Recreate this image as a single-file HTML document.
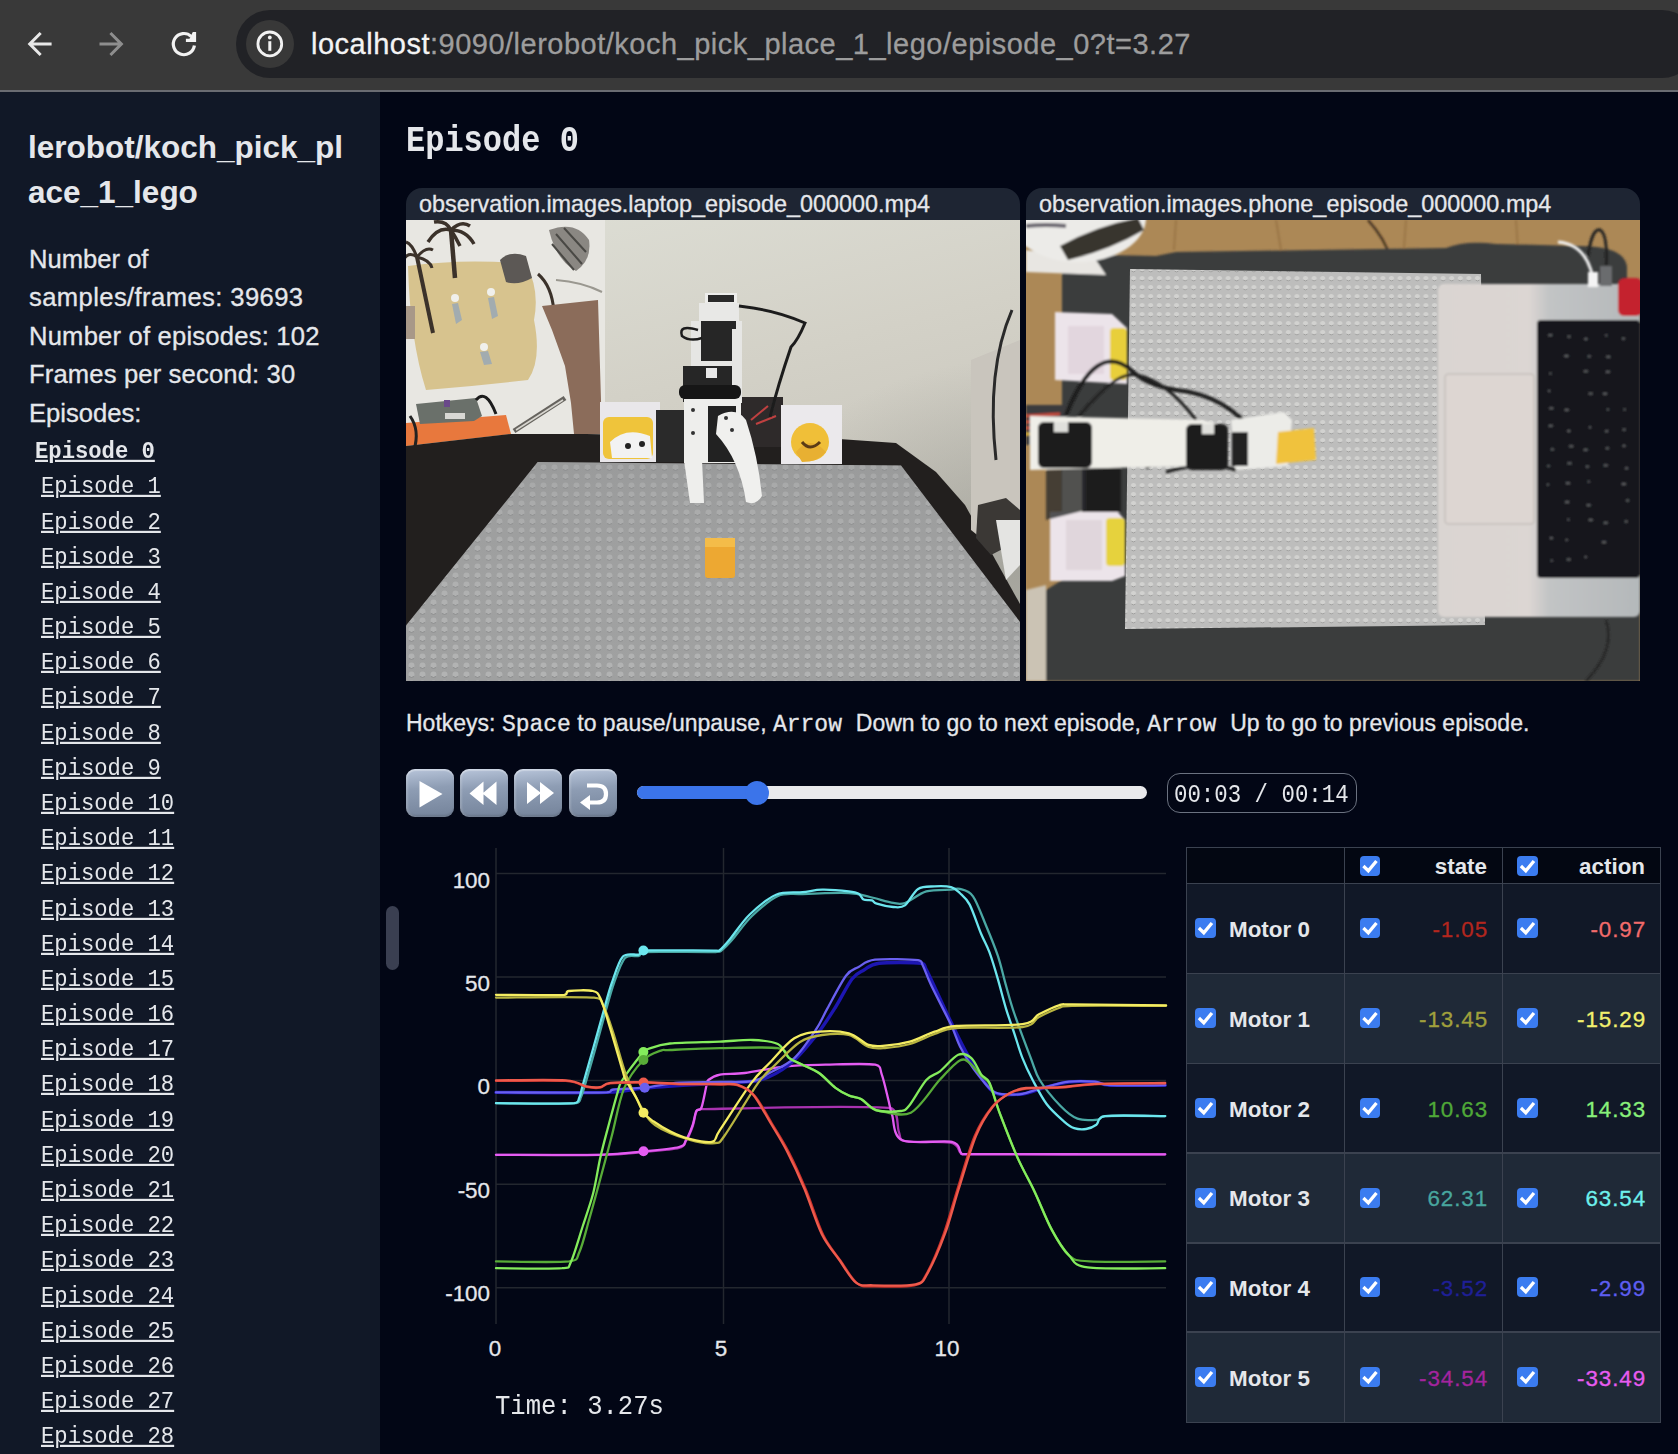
<!DOCTYPE html>
<html><head><meta charset="utf-8">
<style>
*{margin:0;padding:0;box-sizing:border-box}
html,body{width:1678px;height:1454px;overflow:hidden;background:#020615;font-family:"Liberation Sans",sans-serif;color:#e5e7eb;position:relative}
.abs{position:absolute}
.mono{font-family:"Liberation Mono",monospace}
#top{position:absolute;left:0;top:0;width:1678px;height:90px;background:#393939}
#topline{position:absolute;left:0;top:90px;width:1678px;height:2px;background:#6a6c72}
#omni{position:absolute;left:236px;top:10px;width:1460px;height:68px;border-radius:34px;background:#212226}
#infobg{position:absolute;left:246px;top:20px;width:48px;height:48px;border-radius:24px;background:#383838}
#url{position:absolute;left:311px;top:23.5px;font-size:29px;line-height:40px;color:#9d9d9d;white-space:nowrap;letter-spacing:0.5px}
#url b{font-weight:normal;color:#f4f4f4}
#side{position:absolute;left:0;top:92px;width:380px;height:1362px;background:#111827}
#title{position:absolute;left:28px;top:124.5px;font-size:31.5px;line-height:45px;font-weight:bold;color:#e5e7eb;white-space:nowrap}
.stat{position:absolute;left:29px;font-size:25.6px;line-height:38.4px;white-space:nowrap}
.ep{font-family:"Liberation Mono",monospace;font-size:22.2px;line-height:30px;white-space:nowrap;text-decoration:underline;text-decoration-thickness:2px;text-underline-offset:2px;transform:scaleY(1.1);transform-origin:0 24px}
.ep.b{font-weight:bold}
#thumb{position:absolute;left:386px;top:906px;width:13px;height:64px;border-radius:7px;background:#3a3f51}
#h1{position:absolute;left:406px;top:123px;font-size:32px;line-height:40px;font-weight:bold;transform:scaleY(1.14);transform-origin:0 28px}
.card{position:absolute;top:188px;width:614px;height:493px;border-radius:16px 16px 0 0;overflow:hidden;background:#1e2533}
.card .cap{position:absolute;left:13px;top:0;height:32px;font-size:23.4px;line-height:32px;white-space:nowrap;color:#e5e7eb}
.card .img{position:absolute;left:0;top:32px;width:614px;height:461px;overflow:hidden}
#hot{position:absolute;left:406px;top:707px;font-size:23px;line-height:32px;white-space:nowrap}
.btn{position:absolute;top:768.5px;width:47.5px;height:48px;border-radius:9px;background:linear-gradient(175deg,#b8c5da 0%,#8e9db4 40%,#74839a 100%);box-shadow:inset 0 2px 1px rgba(255,255,255,0.3),inset 2px 0 2px rgba(255,255,255,0.18),inset 0 -2px 2px rgba(0,0,0,0.12)}
.btn svg{display:block}
#track{position:absolute;left:637px;top:786px;width:510px;height:13px;border-radius:7px;background:#e9e9ec}
#fill{position:absolute;left:637px;top:786px;width:122px;height:13px;border-radius:7px;background:#3b74ea}
#knob{position:absolute;left:745px;top:781px;width:24px;height:24px;border-radius:12px;background:#3b74ea}
#timebox{position:absolute;left:1167px;top:773px;width:190px;height:40px;border:1.5px solid #6b7280;border-radius:13px}
#timetxt{position:absolute;left:1174px;top:779.5px;font-size:22.4px;line-height:32px;white-space:nowrap;transform:scaleY(1.13);transform-origin:0 23px}
.ylab{position:absolute;width:80px;text-align:right;font-size:22.4px;line-height:24px;left:410px}
.xlab{position:absolute;width:60px;text-align:center;font-size:22.4px;line-height:24px;top:1337px}
#timelab{position:absolute;left:495px;top:1392px;font-size:25.6px;line-height:32px;white-space:nowrap;transform:scaleY(1.1);transform-origin:0 23px}
.cbx{background:#3b7cf0;border-radius:4px}
.cbx svg{display:block}
.th{font-size:22.4px;line-height:32px;font-weight:bold;text-align:right;white-space:nowrap}
.tm{font-size:22.4px;line-height:32px;font-weight:bold;white-space:nowrap}
.tv{font-size:22.4px;line-height:32px;text-align:right;white-space:nowrap;letter-spacing:0.9px}

.stat,#hot,.card .cap,#url,.tv,.ylab,.xlab{-webkit-text-stroke:0.3px currentColor}

</style></head><body>
<div id="top"></div><div id="topline"></div>
<div id="omni"></div><div id="infobg"></div>
<svg class="abs" style="left:0;top:0" width="320" height="90" viewBox="0 0 320 90">
<path transform="translate(21.6,26) scale(1.5)" d="M20 11H7.83l5.59-5.59L12 4l-8 8 8 8 1.41-1.41L7.83 13H20v-2z" fill="#e8e8e8"/>
<path transform="translate(129.5,26) scale(-1.5,1.5)" d="M20 11H7.83l5.59-5.59L12 4l-8 8 8 8 1.41-1.41L7.83 13H20v-2z" fill="#8e8e8e"/>
<path d="M191.2 36.4 A10.6 10.6 0 1 0 194.4 45.6" stroke="#f2f2f2" stroke-width="3.2" fill="none"/><path d="M192.8 31.9 H196.1 V42.1 H185.9 V38.8 H189.5 Z" fill="#f2f2f2"/>
<circle cx="269.8" cy="43.9" r="11.9" stroke="#f2f2f2" stroke-width="2.8" fill="none"/>
<circle cx="269.8" cy="37.5" r="1.9" fill="#f2f2f2"/>
<rect x="268.3" y="41.2" width="3" height="9.6" fill="#f2f2f2"/>
</svg>
<div id="url"><b>localhost</b>:9090/lerobot/koch_pick_place_1_lego/episode_0?t=3.27</div>
<div id="side"></div>
<div id="title">lerobot/koch_pick_pl<br>ace_1_lego</div>
<div class="stat" style="top:240px">Number of</div>
<div class="stat" style="top:278px;letter-spacing:0.4px">samples/frames: 39693</div>
<div class="stat" style="top:317px;letter-spacing:0.2px">Number of episodes: 102</div>
<div class="stat" style="top:355px;letter-spacing:0.15px">Frames per second: 30</div>
<div class="stat" style="top:394px">Episodes:</div>
<div class="abs ep b" style="left:35px;top:437.5px">Episode 0</div>
<div class="abs ep" style="left:41px;top:473.3px">Episode 1</div>
<div class="abs ep" style="left:41px;top:508.5px">Episode 2</div>
<div class="abs ep" style="left:41px;top:543.7px">Episode 3</div>
<div class="abs ep" style="left:41px;top:578.9px">Episode 4</div>
<div class="abs ep" style="left:41px;top:614.0px">Episode 5</div>
<div class="abs ep" style="left:41px;top:649.2px">Episode 6</div>
<div class="abs ep" style="left:41px;top:684.4px">Episode 7</div>
<div class="abs ep" style="left:41px;top:719.6px">Episode 8</div>
<div class="abs ep" style="left:41px;top:754.8px">Episode 9</div>
<div class="abs ep" style="left:41px;top:790.0px">Episode 10</div>
<div class="abs ep" style="left:41px;top:825.2px">Episode 11</div>
<div class="abs ep" style="left:41px;top:860.3px">Episode 12</div>
<div class="abs ep" style="left:41px;top:895.5px">Episode 13</div>
<div class="abs ep" style="left:41px;top:930.7px">Episode 14</div>
<div class="abs ep" style="left:41px;top:965.9px">Episode 15</div>
<div class="abs ep" style="left:41px;top:1001.1px">Episode 16</div>
<div class="abs ep" style="left:41px;top:1036.3px">Episode 17</div>
<div class="abs ep" style="left:41px;top:1071.4px">Episode 18</div>
<div class="abs ep" style="left:41px;top:1106.6px">Episode 19</div>
<div class="abs ep" style="left:41px;top:1141.8px">Episode 20</div>
<div class="abs ep" style="left:41px;top:1177.0px">Episode 21</div>
<div class="abs ep" style="left:41px;top:1212.2px">Episode 22</div>
<div class="abs ep" style="left:41px;top:1247.4px">Episode 23</div>
<div class="abs ep" style="left:41px;top:1282.6px">Episode 24</div>
<div class="abs ep" style="left:41px;top:1317.7px">Episode 25</div>
<div class="abs ep" style="left:41px;top:1352.9px">Episode 26</div>
<div class="abs ep" style="left:41px;top:1388.1px">Episode 27</div>
<div class="abs ep" style="left:41px;top:1423.3px">Episode 28</div>
<div id="thumb"></div>
<div id="h1" class="mono">Episode 0</div>
<div class="card" style="left:406px"><div class="cap">observation.images.laptop_episode_000000.mp4</div><div class="img"><svg width="614" height="461" viewBox="0 0 614 461" style="display:block">
<defs>
<linearGradient id="wall1" x1="0" y1="0" x2="0.35" y2="1"><stop offset="0" stop-color="#dedfd6"/><stop offset="0.45" stop-color="#d3d1c7"/><stop offset="1" stop-color="#c4c1b8"/></linearGradient><radialGradient id="wallsh" cx="1" cy="0.75" r="0.45"><stop offset="0" stop-color="#8e8f88" stop-opacity="0.6"/><stop offset="1" stop-color="#8e8f88" stop-opacity="0"/></radialGradient>
<pattern id="stud1" width="11" height="9" patternUnits="userSpaceOnUse"><rect width="11" height="9" fill="#9fa0a0"/><circle cx="5.5" cy="4.5" r="3" fill="#b2b3b3"/><path d="M3 6.5 Q5.5 8.5 8 6.5" stroke="#8a8b8c" stroke-width="1" fill="none"/></pattern>
<linearGradient id="plate1" x1="0" y1="0" x2="0" y2="1"><stop offset="0" stop-color="#909192" stop-opacity="0.35"/><stop offset="1" stop-color="#b0b0b0" stop-opacity="0"/></linearGradient>
<filter id="bl1"><feGaussianBlur stdDeviation="0.7"/></filter>
</defs>
<rect width="614" height="461" fill="url(#wall1)"/><rect width="614" height="461" fill="url(#wallsh)"/>
<g filter="url(#bl1)">
<rect x="0" y="0" width="199" height="214" fill="#e8e7e2"/>
<path d="M2,46 Q60,38 120,44 Q134,70 128,100 Q136,140 122,160 Q70,166 20,170 Q4,120 2,46 Z" fill="#d7c38e"/>
<path d="M45,10 Q47,35 49,58" stroke="#3b312a" stroke-width="4.5" fill="none"/>
<path d="M45,10 Q32,6 22,22 M45,10 Q40,0 28,2 M45,10 Q55,0 64,6 M45,10 Q60,10 68,24 M45,10 Q50,18 54,26" stroke="#3b312a" stroke-width="3.5" fill="none"/>
<path d="M11,37 Q18,70 27,113" stroke="#3b312a" stroke-width="4" fill="none"/>
<path d="M11,37 Q2,30 -4,42 M11,37 Q6,24 0,22 M11,37 Q20,26 27,30 M11,37 Q24,40 26,48" stroke="#3b312a" stroke-width="3" fill="none"/>
<g fill="#a2acb0"><path d="M46,84 L52,83 L56,100 L50,104 Z"/><path d="M82,78 L88,77 L92,96 L86,99 Z"/><path d="M74,132 L82,131 L86,144 L78,145 Z"/></g><g fill="#f0f0ec"><circle cx="49" cy="78" r="4"/><circle cx="85" cy="72" r="4"/><circle cx="78" cy="127" r="4"/></g>
<path d="M94,40 Q104,30 120,36 L126,58 Q112,66 100,62 Z" fill="#5c5854"/>
<path d="M143,10 Q170,0 183,20 Q186,40 170,51 Q150,40 143,10 Z" fill="#8a8782"/>
<path d="M150,14 L176,44 M158,8 L180,32 M146,24 L168,50" stroke="#4a4844" stroke-width="2"/>
<path d="M132,54 Q146,66 148,92" stroke="#3b312a" stroke-width="3" fill="none"/>
<path d="M150,60 Q176,62 196,72" stroke="#9a9890" stroke-width="2" fill="none"/>
<polygon points="136,86 192,80 196,214 168,214 165,183 159,146 146,110" fill="#8b6c5a"/>
<rect x="0" y="86" width="9" height="33" fill="#a89888"/>
<path d="M108,211 L159,178" stroke="#66645e" stroke-width="5"/><path d="M110,210 L157,180" stroke="#d8d6d0" stroke-width="1.5"/>
<polygon points="0,203 100,195 105,214 0,226" fill="#e8783c"/>
<polygon points="10,184 70,178 76,196 68,201 14,204" fill="#6a706a"/><rect x="39" y="193" width="20" height="6" fill="#d8d8d4"/><rect x="38" y="180" width="6" height="7" fill="#6a4a8a"/>
<path d="M70,180 Q80,168 90,194" stroke="#1a1a1a" stroke-width="3" fill="none"/>
<path d="M4,196 Q14,210 8,230" stroke="#222" stroke-width="3" fill="none"/>
</g>
<polygon points="0,226 105,214 180,214 433,219 490,223 530,252 559,285 614,384 614,461 0,461" fill="#221f1e"/>
<polygon points="131.7,242 495,245.5 614,402 614,461 0,461 0,405.6" fill="url(#stud1)"/>
<polygon points="131.7,242 495,245.5 614,402 614,461 0,461 0,405.6" fill="url(#plate1)"/>
<g filter="url(#bl1)">
<polygon points="565,140 614,120 614,300 590,330 565,310" fill="#c9c5bd"/>
<path d="M606,90 Q580,150 590,240" stroke="#2a2a2a" stroke-width="3" fill="none"/>
<polygon points="572,285 600,278 614,290 614,320 585,335 570,318" fill="#3a3836"/>
<polygon points="590,300 614,300 614,345 600,360" fill="#e4e4e2"/>
<rect x="194" y="182" width="60" height="60" fill="#e9e7ea"/>
<rect x="197" y="197" width="50" height="42" rx="6" fill="#efc43a"/>
<path d="M204,222 Q220,206 244,216 L246,238 L206,238 Z" fill="#f2f2f2"/>
<circle cx="222" cy="226" r="3" fill="#222"/><circle cx="236" cy="224" r="3" fill="#222"/>
<rect x="250" y="190" width="30" height="52" fill="#2a2c2c"/>
<rect x="335" y="177" width="42" height="50" fill="#2e2c2c"/>
<path d="M345,200 L362,186 M350,204 L370,196" stroke="#c04040" stroke-width="2"/>
<rect x="375" y="185" width="61" height="59" fill="#ebe9ec"/>
<circle cx="404" cy="222" r="19" fill="#f0bf38"/>
<path d="M390,232 Q404,214 420,232 Q412,242 396,242 Z" fill="#e8b030"/>
<path d="M396,222 Q404,232 414,222" stroke="#5a3a18" stroke-width="3" fill="none"/>
<rect x="299" y="73" width="32" height="12" fill="#ededeb"/>
<rect x="302" y="75" width="26" height="7" fill="#2c2c2c"/>
<rect x="293" y="83" width="40" height="20" fill="#e8e8e6"/>
<rect x="285" y="101" width="51" height="46" fill="#e6e6e4"/>
<rect x="295" y="101" width="35" height="40" fill="#262626"/>
<rect x="277" y="146" width="59" height="36" fill="#282828"/>
<rect x="326" y="109" width="10" height="74" fill="#e6e6e4"/>
<rect x="273" y="165" width="62" height="14" rx="6" fill="#161616"/>
<rect x="300" y="148" width="11" height="10" fill="#e8e8e8"/>
<path d="M333,86 Q370,90 399,103 Q392,120 385,127 Q372,165 364,197" stroke="#1e1e1e" stroke-width="3" fill="none"/>
<path d="M292,110 Q272,104 276,116 Q284,122 296,118" stroke="#1e1e1e" stroke-width="2.5" fill="none"/>
<rect x="278" y="179" width="57" height="64" fill="#eeeeec"/>
<path d="M278,240 L296,240 L298,283 L284,283 Z" fill="#eeeeec"/>
<rect x="302" y="186" width="28" height="56" fill="#242424"/>
<path d="M312,196 Q330,186 340,200 Q352,236 356,276 Q350,286 340,282 Q334,240 310,214 Z" fill="#f0f0ee"/>
<g fill="#333"><circle cx="287" cy="190" r="2"/><circle cx="287" cy="213" r="2"/><circle cx="320" cy="198" r="2"/><circle cx="326" cy="210" r="2"/></g>
<rect x="299" y="318" width="30" height="40" rx="3" fill="#eda832"/>
<rect x="299" y="318" width="30" height="9" fill="#f4bc4a"/>
</g>
</svg></div></div>
<div class="card" style="left:1026px"><div class="cap">observation.images.phone_episode_000000.mp4</div><div class="img"><svg width="614" height="461" viewBox="0 0 614 461" style="display:block">
<defs>
<pattern id="stud2" width="8.6" height="9" patternUnits="userSpaceOnUse"><rect width="8.6" height="9" fill="#bdbdbc"/><circle cx="4.3" cy="4.5" r="2.6" fill="#d2d2d0"/><path d="M2.2 6 Q4.3 7.8 6.4 6" stroke="#9a9a99" stroke-width="0.9" fill="none"/></pattern>
<linearGradient id="lap" x1="0" y1="0" x2="1" y2="0"><stop offset="0" stop-color="#dad5d2"/><stop offset="0.45" stop-color="#dcd6d3"/><stop offset="0.55" stop-color="#c2c4c5"/><stop offset="1" stop-color="#b4b8ba"/></linearGradient>
<filter id="bl2"><feGaussianBlur stdDeviation="0.8"/></filter>
</defs>
<rect width="614" height="461" fill="#ac8856"/>
<g filter="url(#bl2)">
<path d="M150,0 L148,30 M250,0 L255,30 M380,0 L378,28 M490,0 L492,30" stroke="#9a7646" stroke-width="2"/>
<path d="M342,0 Q360,20 365,40" stroke="#3a2a1a" stroke-width="2" fill="none"/>
<polygon points="0,370 20,365 20,461 0,461" fill="#cbc3b4"/>
<!-- table -->
<path d="M36,38 Q60,34 130,36 L150,32 L420,28 Q440,20 470,24 L552,26 Q598,26 601,46 L601,62 L614,62 L614,461 L20,461 L20,370 L36,360 Z" fill="#3b3c3e"/>
<!-- bowl -->
<polygon points="0,30 70,40 80,55 0,52" fill="#e8e6e2"/>
<ellipse cx="52" cy="-2" rx="68" ry="44" fill="#ecebe8"/>

<path d="M34,26 Q70,6 112,-2 L118,10 Q84,30 42,40 Z" fill="#38342e"/>
<path d="M0,6 Q20,4 40,6" stroke="#6a6670" stroke-width="4" fill="none"/>
</g>
<!-- lego plate -->
<polygon points="104,49 455,54 459,405 99,409" fill="url(#stud2)"/>
<g filter="url(#bl2)">
<!-- laptop -->
<rect x="412" y="64" width="202" height="333" rx="6" fill="url(#lap)"/>
<rect x="419" y="154" width="89" height="150" rx="3" fill="#ddd6d2" stroke="#b8b4b0" stroke-width="1"/>
<rect x="511" y="100" width="103" height="258" rx="4" fill="#17181b"/>
<g fill="#5e6064">
<rect x="522.3" y="114.2" width="4" height="2" />
<rect x="541.5" y="115.6" width="3" height="2" />
<rect x="558.4" y="118.0" width="3" height="2" />
<rect x="579.3" y="114.4" width="2" height="2" />
<rect x="595.9" y="117.6" width="3" height="2" />
<rect x="538.4" y="135.0" width="4" height="2" />
<rect x="561.7" y="135.4" width="3" height="2" />
<rect x="580.3" y="135.8" width="4" height="2" />
<rect x="523.4" y="152.5" width="2" height="2" />
<rect x="557.8" y="150.3" width="4" height="2" />
<rect x="579.8" y="150.8" width="4" height="2" />
<rect x="522.2" y="169.9" width="2" height="2" />
<rect x="562.6" y="172.6" width="4" height="2" />
<rect x="577.0" y="172.7" width="4" height="2" />
<rect x="523.3" y="187.3" width="4" height="2" />
<rect x="538.7" y="188.9" width="4" height="2" />
<rect x="580.8" y="188.5" width="2" height="2" />
<rect x="597.6" y="188.5" width="2" height="2" />
<rect x="522.7" y="204.8" width="4" height="2" />
<rect x="541.3" y="210.0" width="3" height="2" />
<rect x="563.0" y="206.4" width="2" height="2" />
<rect x="579.2" y="210.2" width="3" height="2" />
<rect x="596.6" y="208.6" width="3" height="2" />
<rect x="524.8" y="228.4" width="3" height="2" />
<rect x="543.2" y="225.3" width="4" height="2" />
<rect x="557.6" y="228.8" width="4" height="2" />
<rect x="579.8" y="227.3" width="3" height="2" />
<rect x="596.5" y="224.8" width="3" height="2" />
<rect x="521.5" y="245.0" width="2" height="2" />
<rect x="541.5" y="242.3" width="4" height="2" />
<rect x="559.8" y="245.6" width="3" height="2" />
<rect x="577.7" y="244.4" width="4" height="2" />
<rect x="599.1" y="247.3" width="3" height="2" />
<rect x="520.8" y="263.6" width="2" height="2" />
<rect x="539.9" y="262.2" width="4" height="2" />
<rect x="561.7" y="260.6" width="2" height="2" />
<rect x="595.8" y="263.0" width="4" height="2" />
<rect x="539.1" y="281.1" width="4" height="2" />
<rect x="560.6" y="284.2" width="4" height="2" />
<rect x="600.1" y="279.5" width="3" height="2" />
<rect x="541.4" y="298.6" width="2" height="2" />
<rect x="562.7" y="298.9" width="4" height="2" />
<rect x="577.7" y="301.8" width="4" height="2" />
<rect x="598.7" y="300.5" width="3" height="2" />
<rect x="523.8" y="317.1" width="3" height="2" />
<rect x="539.7" y="318.9" width="2" height="2" />
<rect x="576.0" y="321.2" width="4" height="2" />
<rect x="524.7" y="339.6" width="2" height="2" />
<rect x="540.7" y="338.5" width="4" height="2" />
<rect x="558.7" y="336.0" width="2" height="2" />
</g>
<rect x="592" y="58" width="24" height="38" rx="6" fill="#c4222e"/>
<path d="M532,22 Q560,24 567,58" stroke="#f2f2f2" stroke-width="3" fill="none"/>
<rect x="562" y="52" width="10" height="15" fill="#f4f4f4"/>
<path d="M562,36 Q566,8 574,10 Q582,14 580,48" stroke="#222" stroke-width="3" fill="none"/>
<rect x="574" y="46" width="12" height="20" fill="#6a6c6e"/>
<path d="M580,400 Q590,430 560,461" stroke="#222" stroke-width="2" fill="none"/>
<!-- boxes -->
<polygon points="29,92 86,94 101,108 101,164 29,160" fill="#ece4ea"/>
<rect x="42" y="106" width="36" height="48" fill="#e2d6de"/>
<rect x="84" y="108" width="17" height="52" rx="4" fill="#e8cf3a"/>
<polygon points="24,292 90,290 99,300 99,356 86,361 24,361" fill="#ece4ea"/>
<rect x="40" y="300" width="36" height="50" fill="#e0d6dc"/>
<rect x="80" y="298" width="19" height="48" rx="4" fill="#e6d23c"/>
<!-- electronics left -->
<rect x="0" y="185" width="40" height="40" fill="#3a3a3c"/>
<path d="M0,196 L34,194 M0,202 L34,200 M0,208 L30,207" stroke="#c84a3a" stroke-width="3"/>
<path d="M0,214 L30,214" stroke="#d8b030" stroke-width="3"/>
<rect x="55" y="245" width="40" height="47" fill="#1c1c1e"/>
<rect x="36" y="245" width="20" height="47" fill="#e8e6e0"/>
<path d="M20,250 Q40,240 60,250 L60,290 L20,300 Z" fill="#2a2c2c" opacity="0.8"/>
<!-- cables -->
<path d="M40,195 Q70,120 105,150 Q120,165 150,170 Q200,175 230,215" stroke="#1a1a1a" stroke-width="4" fill="none"/>
<path d="M50,200 Q90,150 110,155 Q140,160 170,200" stroke="#222" stroke-width="3" fill="none"/>
<path d="M120,248 Q150,230 170,246 M140,252 Q180,240 210,250" stroke="#1a1a1a" stroke-width="3" fill="none"/>
<!-- arm -->
<polygon points="4,196 176,200 200,206 200,248 160,246 4,250" fill="#efeee8"/>
<rect x="12" y="202" width="54" height="46" rx="6" fill="#1f1f1f"/>
<rect x="28" y="202" width="14" height="10" fill="#e0e0dc"/>
<rect x="160" y="204" width="42" height="46" rx="6" fill="#1f1f1f"/>
<rect x="176" y="204" width="12" height="10" fill="#e0e0dc"/>
<polygon points="205,200 258,192 266,200 262,246 210,250" fill="#ecece8"/>
<rect x="206" y="212" width="16" height="34" fill="#222"/>
<polygon points="252,212 288,208 290,240 250,244" fill="#f0c23e"/>
</g>
</svg></div></div>
<div id="hot">Hotkeys: <span class="mono">Space</span> to pause/unpause, <span class="mono">Arrow </span>Down to go to next episode, <span class="mono">Arrow </span>Up to go to previous episode.</div>
<div class="btn" style="left:406px"><svg width="48" height="48" viewBox="0 0 48 48"><path d="M13.5 12 L36.5 25 L13.5 38.5 Z" fill="#fff"/></svg></div>
<div class="btn" style="left:460px"><svg width="48" height="48" viewBox="0 0 48 48"><path d="M9.5 24.5 L23.5 12.5 V36 Z M22.5 24.5 L36.5 12.5 V36 Z" fill="#fff"/></svg></div>
<div class="btn" style="left:514px"><svg width="48" height="48" viewBox="0 0 48 48"><path d="M13 13 L27 24 L13 35 Z M26 13 L40 24 L26 35 Z" fill="#fff"/></svg></div>
<div class="btn" style="left:569px"><svg width="48" height="48" viewBox="0 0 48 48"><path d="M18 16.5 H28 Q37 16.5 37 25 Q37 33.5 28 33.5 H20" stroke="#fff" stroke-width="4.2" fill="none"/><path d="M11 33.5 L21 26 V41 Z" fill="#fff"/></svg></div>
<div id="track"></div><div id="fill"></div><div id="knob"></div>
<div id="timebox"></div><div id="timetxt" class="mono">00:03 / 00:14</div>
<svg class="abs" style="left:0;top:0" width="1678" height="1454" viewBox="0 0 1678 1454">
<line x1="496" y1="873.4" x2="1166" y2="873.4" stroke="#23272f" stroke-width="1.5"/>
<line x1="496" y1="977" x2="1166" y2="977" stroke="#23272f" stroke-width="1.5"/>
<line x1="496" y1="1080.6" x2="1166" y2="1080.6" stroke="#23272f" stroke-width="1.5"/>
<line x1="496" y1="1184.2" x2="1166" y2="1184.2" stroke="#23272f" stroke-width="1.5"/>
<line x1="496" y1="1287.8" x2="1166" y2="1287.8" stroke="#23272f" stroke-width="1.5"/>
<line x1="496" y1="848" x2="496" y2="1324" stroke="#23272f" stroke-width="1.5"/>
<line x1="723.5" y1="848" x2="723.5" y2="1324" stroke="#23272f" stroke-width="1.5"/>
<line x1="949" y1="848" x2="949" y2="1324" stroke="#23272f" stroke-width="1.5"/>
<path d="M496.0,1154.8 C512.6,1154.8 576.4,1155.2 600.0,1154.8 C623.6,1154.4 630.9,1153.1 643.5,1152.0 C656.1,1150.9 672.2,1149.8 679.0,1148.0 C685.8,1146.2 683.8,1144.5 686.0,1141.0 C688.2,1137.5 691.2,1130.6 692.8,1126.0 C694.4,1121.4 694.9,1114.7 696.3,1112.0 C697.7,1109.3 696.3,1109.8 701.5,1109.2 C732.8,1108.6 860.4,1104.8 892.0,1108.4 C898.8,1112.0 896.9,1126.4 898.8,1131.6 C900.7,1136.8 898.8,1139.2 904.0,1141.0 C912.3,1142.8 941.4,1140.9 950.4,1142.7 C959.4,1144.5 958.1,1150.3 960.0,1152.2 C961.9,1154.1 960.0,1154.0 962.3,1154.3 C995.1,1154.6 1132.7,1154.3 1165.2,1154.3" fill="none" stroke="#a832b0" stroke-width="2.3" stroke-linejoin="round" stroke-linecap="round"/>
<path d="M496.0,1154.8 C512.6,1154.8 576.4,1155.4 600.0,1154.8 C623.6,1154.2 630.9,1152.5 643.5,1151.3 C656.1,1150.1 672.2,1148.8 679.0,1147.0 C685.8,1145.2 683.8,1143.8 686.0,1140.2 C688.2,1136.6 691.2,1129.4 692.8,1124.7 C694.4,1120.0 694.9,1113.8 696.3,1111.0 C697.7,1108.2 699.9,1111.7 701.5,1107.5 C703.1,1103.3 705.5,1089.4 706.6,1085.0 C707.7,1080.6 706.6,1081.7 708.3,1080.0 C710.4,1078.3 714.2,1075.7 720.0,1074.6 C725.8,1073.5 734.2,1074.3 744.8,1073.0 C755.4,1071.7 773.1,1067.6 786.0,1066.3 C798.9,1065.0 811.3,1065.0 825.6,1064.7 C839.9,1064.4 866.2,1063.1 875.2,1064.7 C881.8,1066.3 879.7,1069.0 881.8,1074.6 C883.9,1080.2 886.8,1093.6 888.4,1100.0 C890.0,1106.4 889.8,1108.0 892.0,1114.4 C894.2,1120.8 892.6,1135.8 902.2,1140.2 C911.8,1144.6 942.7,1140.0 952.0,1141.9 C960.6,1143.8 959.0,1150.3 960.6,1152.2 C962.2,1154.1 960.6,1153.7 962.3,1154.0 C995.0,1154.3 1132.7,1154.3 1165.2,1154.3" fill="none" stroke="#e45cf2" stroke-width="2.3" stroke-linejoin="round" stroke-linecap="round"/>
<path d="M496.0,1092.4 C513.7,1092.4 583.1,1093.1 606.9,1092.4 C630.7,1091.7 626.6,1089.5 644.7,1088.0 C662.8,1086.5 701.6,1084.3 720.0,1083.0 C738.4,1081.7 748.8,1083.0 760.0,1080.0 C771.2,1077.0 781.1,1071.0 790.0,1064.0 C798.9,1057.0 808.5,1045.0 815.7,1036.0 C822.9,1027.0 829.2,1017.1 835.0,1008.0 C840.8,998.9 847.4,985.1 852.0,979.0 C856.6,972.9 859.7,972.5 864.0,970.0 C868.3,967.5 869.9,964.3 879.0,963.2 C888.1,962.1 913.5,962.3 921.0,963.2 C926.0,964.1 923.6,964.7 926.0,969.0 C928.4,973.3 932.2,981.8 936.0,990.0 C939.8,998.2 945.4,1010.4 950.0,1020.0 C954.6,1029.6 960.0,1041.0 964.8,1049.8 C969.6,1058.6 975.2,1068.1 980.0,1075.0 C984.8,1081.9 988.2,1090.0 995.0,1093.0 C1001.8,1096.0 1014.8,1094.8 1022.5,1094.0 C1030.2,1093.2 1035.7,1089.9 1043.1,1088.0 C1050.5,1086.1 1060.7,1083.0 1069.0,1082.0 C1077.3,1081.0 1088.1,1081.5 1094.7,1082.0 C1101.3,1082.5 1098.9,1084.7 1110.2,1085.2 C1121.5,1085.7 1156.4,1085.2 1165.2,1085.2" fill="none" stroke="#1d16b2" stroke-width="3.4" stroke-linejoin="round" stroke-linecap="round"/>
<path d="M496.0,1092.4 C513.7,1092.4 588.1,1092.9 606.9,1092.4 C613.8,1091.9 607.8,1090.3 613.8,1089.5 C619.8,1088.7 634.3,1088.8 644.7,1087.7 C655.1,1086.6 667.0,1083.5 679.0,1082.6 C691.0,1081.7 708.2,1082.2 720.0,1082.0 C731.8,1081.8 745.1,1082.6 753.0,1081.2 C760.9,1079.8 762.9,1076.7 769.5,1073.0 C776.1,1069.3 786.9,1065.0 794.3,1058.1 C801.7,1051.2 810.4,1037.9 815.7,1030.0 C821.0,1022.1 822.5,1017.3 827.3,1008.6 C832.1,999.9 841.0,982.4 846.0,975.7 C851.0,969.0 854.0,969.6 858.6,967.0 C863.2,964.4 865.5,960.8 875.0,959.7 C884.5,958.6 910.3,959.2 918.0,960.2 C923.0,961.2 920.9,962.0 923.0,966.0 C925.1,970.0 926.8,976.0 931.3,985.5 C935.8,995.0 946.5,1015.3 951.1,1025.1 C955.7,1034.9 956.5,1039.6 960.0,1046.5 C963.5,1053.4 967.8,1060.9 973.0,1068.0 C978.2,1075.1 987.0,1086.9 992.8,1091.1 C998.6,1095.3 1004.5,1094.0 1009.3,1094.4 C1014.1,1094.8 1017.1,1094.9 1022.5,1093.8 C1027.9,1092.7 1035.7,1089.6 1043.1,1087.7 C1050.5,1085.8 1060.7,1082.7 1069.0,1081.7 C1077.3,1080.7 1088.1,1081.1 1094.7,1081.7 C1101.3,1082.3 1098.9,1084.6 1110.2,1085.2 C1121.5,1085.8 1156.4,1085.2 1165.2,1085.2" fill="none" stroke="#6a60f0" stroke-width="2.3" stroke-linejoin="round" stroke-linecap="round"/>
<path d="M496.0,1103.2 C508.8,1103.2 562.4,1104.2 576.0,1103.2 C581.0,1102.2 579.6,1099.9 581.0,1097.0 C582.4,1094.1 582.8,1092.5 585.0,1085.0 C587.2,1077.5 591.6,1062.0 595.0,1050.0 C598.4,1038.0 603.0,1020.7 606.0,1010.0 C609.0,999.3 611.0,991.3 614.0,983.0 C617.0,974.7 621.0,962.3 625.0,958.0 C629.0,953.7 635.8,957.0 638.7,956.0 C641.6,955.0 638.7,952.6 643.4,952.0 C655.8,951.4 703.4,952.3 716.0,952.0 C722.0,951.7 719.4,951.9 722.0,950.0 C724.6,948.1 727.2,945.4 732.0,940.0 C736.8,934.6 744.6,923.0 752.0,916.0 C759.4,909.0 769.9,899.5 778.0,896.0 C786.1,892.5 791.2,894.5 802.5,894.0 C813.8,893.5 838.0,892.5 848.8,893.0 C859.6,893.5 862.9,895.4 870.0,897.0 C877.1,898.6 887.7,901.9 893.3,902.9 C898.9,903.9 899.7,904.8 905.0,903.0 C910.3,901.2 918.9,893.5 926.3,891.4 C933.7,889.3 945.6,890.1 951.0,889.7 C956.4,889.3 956.3,887.8 959.8,888.9 C963.3,890.0 968.8,890.4 973.0,896.3 C977.2,902.2 982.2,916.5 986.2,926.0 C990.2,935.5 994.6,946.2 997.8,955.7 C1001.0,965.2 1003.4,976.3 1006.0,985.5 C1008.6,994.7 1010.3,1001.9 1014.3,1013.5 C1018.3,1025.1 1026.7,1047.5 1030.8,1058.1 C1034.9,1068.7 1035.0,1072.4 1039.7,1080.0 C1044.4,1087.6 1054.3,1099.6 1060.3,1105.8 C1066.3,1112.0 1071.4,1116.5 1077.5,1118.7 C1083.6,1120.9 1093.8,1119.9 1098.2,1119.5 C1102.6,1119.1 1098.2,1116.6 1105.0,1116.1 C1115.7,1115.6 1155.6,1116.1 1165.2,1116.1" fill="none" stroke="#4aa8a4" stroke-width="2.3" stroke-linejoin="round" stroke-linecap="round"/>
<path d="M496.0,1103.2 C508.5,1103.2 560.9,1104.2 574.2,1103.2 C579.4,1102.2 578.0,1100.1 579.4,1097.2 C580.8,1094.3 580.7,1092.6 582.8,1085.0 C584.9,1077.4 589.4,1061.8 592.8,1049.8 C596.2,1037.8 600.9,1020.7 603.9,1010.0 C606.9,999.3 608.8,991.6 611.8,983.0 C614.8,974.4 618.6,961.0 622.9,956.5 C627.2,952.0 635.4,955.6 638.7,954.6 C642.0,953.6 638.7,951.1 643.4,950.5 C655.8,949.9 703.7,950.7 716.0,950.6 C720.0,950.5 717.8,951.8 720.0,950.0 C722.2,948.2 725.1,944.9 729.9,939.2 C734.7,933.5 742.3,921.6 749.7,914.5 C757.1,907.4 767.7,898.3 776.1,894.7 C784.5,891.1 795.1,893.0 802.5,892.2 C809.9,891.4 814.9,889.8 822.3,889.7 C829.7,889.6 843.0,890.7 848.8,891.4 C854.6,892.1 856.3,892.5 858.7,893.8 C861.1,895.1 861.5,898.5 863.6,899.6 C865.7,900.7 869.8,899.7 871.9,900.4 C874.0,901.1 873.4,902.6 876.8,903.7 C880.2,904.8 888.8,906.7 893.3,907.0 C897.8,907.3 900.9,908.3 904.9,905.4 C908.9,902.5 913.3,891.9 918.1,888.9 C922.9,885.9 929.3,886.7 934.6,886.4 C939.9,886.1 947.1,886.1 951.1,887.2 C955.1,888.3 956.8,890.2 959.8,893.0 C962.8,895.8 966.3,898.0 969.7,904.6 C973.1,911.2 978.1,926.7 981.3,934.3 C984.5,941.9 986.9,945.3 989.5,952.4 C992.1,959.5 995.2,969.9 997.8,978.9 C1000.4,987.9 1003.4,999.9 1006.0,1008.6 C1008.6,1017.3 1011.7,1025.4 1014.3,1033.3 C1016.9,1041.2 1019.6,1050.7 1022.5,1058.1 C1025.4,1065.5 1028.5,1072.2 1032.4,1079.5 C1036.3,1086.8 1041.6,1097.3 1046.6,1104.0 C1051.6,1110.7 1059.4,1117.4 1063.8,1121.3 C1068.2,1125.2 1070.5,1126.9 1074.1,1128.1 C1077.7,1129.3 1082.5,1129.5 1086.1,1129.0 C1089.7,1128.5 1093.4,1126.8 1096.4,1124.7 C1099.4,1122.6 1096.4,1117.5 1105.0,1116.1 C1116.0,1114.7 1155.6,1116.1 1165.2,1116.1" fill="none" stroke="#6ce6ee" stroke-width="2.3" stroke-linejoin="round" stroke-linecap="round"/>
<path d="M496.0,1261.4 C507.7,1261.4 555.7,1262.9 569.0,1261.4 C579.4,1259.9 576.1,1259.0 579.4,1252.0 C582.7,1245.0 586.4,1229.0 589.7,1217.5 C593.0,1206.0 596.4,1193.2 600.0,1180.0 C603.6,1166.8 608.2,1149.6 612.0,1135.0 C615.8,1120.4 619.0,1100.6 624.0,1088.6 C629.0,1076.6 637.5,1066.1 643.4,1060.0 C649.3,1053.9 656.5,1052.2 660.8,1050.6 C665.1,1049.0 660.8,1050.4 670.0,1050.0 C679.5,1049.6 702.8,1048.5 720.0,1048.2 C737.2,1047.9 766.7,1046.6 777.8,1048.2 C788.9,1049.8 785.3,1055.5 789.3,1058.1 C793.3,1060.7 797.7,1062.3 802.5,1064.7 C807.3,1067.1 813.7,1069.3 819.0,1073.0 C824.3,1076.7 830.7,1084.2 835.5,1087.8 C840.3,1091.4 844.8,1093.7 848.9,1095.5 C853.0,1097.3 857.4,1097.1 861.0,1099.0 C864.6,1100.9 868.3,1105.6 871.3,1107.5 C874.3,1109.4 873.6,1110.2 879.9,1111.0 C886.2,1111.8 901.2,1117.7 910.8,1112.7 C920.4,1107.7 932.2,1087.8 940.0,1079.5 C947.8,1071.2 955.0,1063.2 959.8,1060.6 C964.6,1058.0 966.3,1060.5 969.7,1063.0 C973.1,1065.5 978.1,1072.6 981.3,1076.0 C984.5,1079.4 986.5,1077.9 989.5,1084.0 C992.5,1090.1 995.7,1102.7 1000.2,1114.4 C1004.7,1126.1 1011.9,1145.0 1017.4,1157.4 C1022.9,1169.8 1029.1,1180.1 1034.6,1191.7 C1040.1,1203.3 1046.2,1219.4 1051.7,1229.6 C1057.2,1239.8 1062.8,1250.2 1068.9,1255.3 C1075.0,1260.4 1074.2,1260.4 1089.6,1261.4 C1105.0,1262.4 1153.1,1261.4 1165.2,1261.4" fill="none" stroke="#58ac38" stroke-width="2.3" stroke-linejoin="round" stroke-linecap="round"/>
<path d="M496.0,1268.2 C506.6,1268.2 550.2,1269.2 562.2,1268.2 C570.8,1267.2 567.5,1269.0 570.8,1262.2 C574.1,1255.4 579.2,1237.0 582.8,1226.0 C586.4,1215.0 590.3,1204.2 593.1,1193.5 C595.9,1182.8 597.8,1168.9 600.0,1159.0 C602.2,1149.1 604.1,1142.0 606.9,1131.6 C609.7,1121.2 614.7,1102.1 617.2,1093.8 C619.7,1085.5 618.2,1086.7 622.4,1080.0 C626.6,1073.3 639.3,1057.0 643.4,1052.0 C647.5,1047.0 643.7,1050.4 648.0,1049.0 C652.3,1047.6 658.5,1044.7 670.0,1043.5 C681.5,1042.3 706.7,1042.2 720.0,1041.6 C733.3,1041.0 743.8,1039.6 753.0,1040.0 C762.2,1040.4 772.0,1041.1 777.8,1044.0 C783.6,1046.9 785.3,1054.8 789.3,1058.1 C793.3,1061.4 797.7,1062.3 802.5,1064.7 C807.3,1067.1 813.7,1069.3 819.0,1073.0 C824.3,1076.7 830.7,1084.2 835.5,1087.8 C840.3,1091.4 844.8,1093.7 848.9,1095.5 C853.0,1097.3 857.4,1097.1 861.0,1099.0 C864.6,1100.9 868.3,1105.6 871.3,1107.5 C874.3,1109.4 875.2,1110.4 879.9,1111.0 C884.6,1111.6 895.8,1111.8 900.5,1111.0 C905.2,1110.2 905.0,1110.8 909.1,1105.8 C913.2,1100.8 921.4,1085.5 926.3,1080.0 C931.2,1074.5 934.9,1075.3 940.0,1071.3 C945.1,1067.3 953.2,1056.9 958.2,1054.8 C963.2,1052.7 967.7,1054.9 971.4,1058.1 C975.1,1061.3 978.4,1070.6 981.3,1074.6 C984.2,1078.6 986.5,1076.4 989.5,1082.8 C992.5,1089.2 995.7,1102.5 1000.2,1114.4 C1004.7,1126.3 1011.9,1145.0 1017.4,1157.4 C1022.9,1169.8 1029.1,1180.1 1034.6,1191.7 C1040.1,1203.3 1046.2,1219.4 1051.7,1229.6 C1057.2,1239.8 1063.1,1249.3 1068.9,1255.3 C1074.7,1261.3 1072.4,1265.3 1087.8,1267.4 C1103.2,1269.5 1152.8,1268.1 1165.2,1268.2" fill="none" stroke="#84ec5c" stroke-width="2.3" stroke-linejoin="round" stroke-linecap="round"/>
<path d="M496.0,997.6 C511.7,997.6 576.9,996.4 594.0,997.6 C603.0,998.8 600.0,999.5 603.0,1005.0 C606.0,1010.5 609.3,1020.8 613.0,1032.0 C616.7,1043.2 621.7,1063.3 626.0,1075.0 C630.3,1086.7 635.4,1097.0 640.0,1105.0 C644.6,1113.0 647.0,1119.4 655.0,1125.0 C663.0,1130.6 680.4,1137.1 690.0,1140.0 C699.6,1142.9 709.4,1143.8 715.0,1143.0 C720.6,1142.2 718.2,1144.5 725.0,1135.0 C731.8,1125.5 749.8,1094.6 757.8,1083.4 C765.8,1072.2 768.2,1071.6 775.0,1065.0 C781.8,1058.4 792.5,1046.8 800.0,1042.0 C807.5,1037.2 814.2,1036.1 822.0,1035.0 C829.8,1033.9 841.3,1033.1 848.8,1035.0 C856.3,1036.9 862.8,1044.9 868.6,1047.0 C874.4,1049.1 878.4,1048.5 885.0,1048.0 C891.6,1047.5 902.1,1046.2 910.0,1044.0 C917.9,1041.8 927.2,1036.6 934.6,1034.0 C942.0,1031.4 942.4,1029.1 956.5,1028.0 C970.6,1026.9 1009.3,1028.8 1022.5,1027.0 C1035.7,1025.2 1033.2,1020.0 1039.0,1017.0 C1044.8,1014.0 1053.6,1009.8 1058.9,1008.0 C1064.2,1006.2 1058.9,1006.2 1072.0,1005.8 C1089.2,1005.4 1151.0,1005.8 1166.1,1005.8" fill="none" stroke="#b8b440" stroke-width="2.3" stroke-linejoin="round" stroke-linecap="round"/>
<path d="M496.0,994.8 C506.9,994.8 552.6,995.4 564.3,994.8 C569.0,994.2 564.4,991.6 569.0,991.0 C573.6,990.4 587.7,989.7 592.8,991.0 C597.9,992.3 597.9,993.1 600.7,999.0 C603.5,1004.9 606.5,1016.3 610.0,1027.7 C613.5,1039.1 619.9,1061.6 622.4,1070.0 C624.9,1078.4 623.6,1075.6 625.8,1080.0 C628.0,1084.4 633.2,1092.0 636.0,1097.2 C638.8,1102.4 640.7,1108.8 643.5,1112.7 C646.3,1116.6 649.0,1118.3 653.3,1121.3 C657.6,1124.3 665.0,1128.9 670.5,1131.6 C676.0,1134.3 681.1,1136.8 687.7,1138.4 C694.3,1140.0 706.6,1143.3 711.8,1141.9 C717.0,1140.5 713.7,1139.3 720.0,1129.9 C726.3,1120.5 743.1,1094.1 751.0,1083.4 C758.9,1072.7 762.6,1070.2 769.5,1063.0 C776.4,1055.8 786.4,1043.3 794.3,1038.3 C802.2,1033.3 810.3,1032.5 819.0,1031.7 C827.7,1030.9 840.9,1031.2 848.8,1033.3 C856.7,1035.4 862.8,1042.9 868.6,1044.9 C874.4,1046.9 878.5,1046.2 885.1,1045.7 C891.7,1045.2 901.9,1043.8 909.8,1041.6 C917.7,1039.4 927.1,1034.2 934.6,1031.7 C942.1,1029.2 942.4,1027.1 956.5,1025.9 C970.6,1024.7 1009.3,1026.1 1022.5,1024.2 C1035.7,1022.3 1033.2,1017.3 1039.0,1014.3 C1044.8,1011.3 1053.6,1006.9 1058.9,1005.3 C1064.2,1003.7 1058.9,1004.4 1072.0,1004.4 C1089.2,1004.4 1151.0,1005.2 1166.1,1005.3" fill="none" stroke="#f4ec62" stroke-width="2.3" stroke-linejoin="round" stroke-linecap="round"/>
<path d="M496.0,1080.9 C507.1,1080.9 551.2,1079.9 565.6,1080.9 C580.0,1081.9 580.8,1085.8 586.3,1086.9 C591.8,1088.0 596.2,1088.3 600.0,1087.7 C603.8,1087.1 603.3,1084.2 610.3,1083.4 C617.3,1082.6 632.5,1082.5 643.5,1082.6 C654.5,1082.7 666.8,1084.0 679.0,1084.3 C691.2,1084.6 710.7,1084.4 720.0,1084.5 C729.3,1084.6 731.7,1083.4 737.2,1085.2 C742.7,1087.0 748.9,1089.5 754.4,1095.5 C759.9,1101.5 766.1,1113.9 771.6,1123.0 C777.1,1132.1 783.3,1141.5 788.8,1152.2 C794.3,1162.9 800.5,1176.8 806.0,1190.0 C811.5,1203.2 817.6,1223.4 823.1,1234.7 C828.6,1246.0 834.8,1252.7 840.3,1260.5 C845.8,1268.3 852.0,1279.6 857.5,1283.7 C863.0,1287.8 865.6,1286.0 874.7,1286.3 C883.8,1286.6 906.0,1287.3 914.3,1285.4 C922.6,1283.5 921.6,1282.4 926.3,1274.3 C931.0,1266.2 938.6,1248.2 943.5,1234.7 C948.4,1221.2 952.3,1205.7 957.2,1190.0 C962.1,1174.3 968.9,1149.9 974.4,1136.7 C979.9,1123.5 986.1,1114.4 991.6,1107.5 C997.1,1100.6 1003.3,1096.8 1008.8,1093.8 C1014.3,1090.8 1017.8,1089.6 1026.0,1088.6 C1034.2,1087.6 1049.3,1088.4 1060.3,1087.7 C1071.3,1087.0 1077.9,1085.0 1094.7,1084.3 C1111.5,1083.6 1153.9,1083.5 1165.2,1083.4" fill="none" stroke="#c8302a" stroke-width="2.3" stroke-linejoin="round" stroke-linecap="round"/>
<path d="M496.0,1080.4 C507.1,1080.4 551.2,1079.4 565.6,1080.4 C580.0,1081.4 580.8,1085.3 586.3,1086.4 C591.8,1087.5 596.2,1087.8 600.0,1087.2 C603.8,1086.6 603.3,1083.7 610.3,1082.9 C617.3,1082.1 632.5,1082.0 643.5,1082.1 C654.5,1082.2 666.8,1083.5 679.0,1083.8 C691.2,1084.1 710.7,1083.9 720.0,1084.0 C729.3,1084.1 731.9,1083.0 737.2,1084.7 C742.5,1086.4 747.8,1088.5 753.0,1094.5 C758.2,1100.5 764.6,1112.9 770.0,1122.0 C775.4,1131.1 781.5,1140.5 787.0,1151.2 C792.5,1161.9 799.0,1175.8 804.5,1189.0 C810.0,1202.2 816.1,1222.4 821.6,1233.7 C827.1,1245.0 833.5,1251.7 839.0,1259.5 C844.5,1267.3 850.6,1278.6 856.0,1282.7 C861.4,1286.8 863.5,1285.0 873.0,1285.3 C882.5,1285.6 906.8,1286.3 915.5,1284.4 C924.2,1282.5 922.8,1281.4 927.5,1273.3 C932.2,1265.2 940.0,1247.2 945.0,1233.7 C950.0,1220.2 953.7,1204.7 958.7,1189.0 C963.7,1173.3 970.5,1148.9 976.0,1135.7 C981.5,1122.5 987.6,1113.3 993.0,1106.5 C998.4,1099.7 1004.7,1096.0 1010.0,1093.0 C1015.3,1090.0 1018.0,1088.9 1026.0,1088.0 C1034.0,1087.1 1049.3,1087.9 1060.3,1087.2 C1071.3,1086.5 1077.9,1084.5 1094.7,1083.8 C1111.5,1083.1 1153.9,1083.1 1165.2,1083.0" fill="none" stroke="#ee5a4c" stroke-width="2.3" stroke-linejoin="round" stroke-linecap="round"/>
<circle cx="643.4" cy="950.5" r="5" fill="#6ce6ee"/>
<circle cx="643.4" cy="1052" r="5" fill="#84ec5c"/>
<circle cx="643.4" cy="1060" r="5" fill="#58ac38"/>
<circle cx="643.5" cy="1082.6" r="5" fill="#ee5a4c"/>
<circle cx="644.7" cy="1087.7" r="5" fill="#6a60f0"/>
<circle cx="643.5" cy="1112.7" r="5" fill="#f4ec62"/>
<circle cx="643.5" cy="1151.3" r="5" fill="#e45cf2"/>
</svg>
<div class="ylab" style="top:869px">100</div>
<div class="ylab" style="top:972px">50</div>
<div class="ylab" style="top:1075px">0</div>
<div class="ylab" style="top:1179px">-50</div>
<div class="ylab" style="top:1282px">-100</div>
<div class="xlab" style="left:465px">0</div>
<div class="xlab" style="left:691px">5</div>
<div class="xlab" style="left:917px">10</div>
<div id="timelab" class="mono">Time: 3.27s</div>
<div class="abs" style="left:1186.6px;top:847.7px;width:474.10000000000014px;height:35.799999999999955px;background:#030712"></div>
<div class="abs" style="left:1186.6px;top:883.5px;width:474.10000000000014px;height:89.89999999999998px;background:#111827"></div>
<div class="abs" style="left:1186.6px;top:973.4px;width:474.10000000000014px;height:90.00000000000011px;background:#1f2937"></div>
<div class="abs" style="left:1186.6px;top:1063.4px;width:474.10000000000014px;height:89.5px;background:#111827"></div>
<div class="abs" style="left:1186.6px;top:1152.9px;width:474.10000000000014px;height:90.0px;background:#1f2937"></div>
<div class="abs" style="left:1186.6px;top:1242.9px;width:474.10000000000014px;height:89.0px;background:#111827"></div>
<div class="abs" style="left:1186.6px;top:1331.9px;width:474.10000000000014px;height:90.5px;background:#1f2937"></div>
<div class="abs" style="left:1185.85px;top:846.95px;width:475.60000000000014px;height:1.5px;background:#3b4250"></div>
<div class="abs" style="left:1185.85px;top:882.75px;width:475.60000000000014px;height:1.5px;background:#3b4250"></div>
<div class="abs" style="left:1185.85px;top:972.65px;width:475.60000000000014px;height:1.5px;background:#3b4250"></div>
<div class="abs" style="left:1185.85px;top:1062.65px;width:475.60000000000014px;height:1.5px;background:#3b4250"></div>
<div class="abs" style="left:1185.85px;top:1152.15px;width:475.60000000000014px;height:1.5px;background:#3b4250"></div>
<div class="abs" style="left:1185.85px;top:1242.15px;width:475.60000000000014px;height:1.5px;background:#3b4250"></div>
<div class="abs" style="left:1185.85px;top:1331.15px;width:475.60000000000014px;height:1.5px;background:#3b4250"></div>
<div class="abs" style="left:1185.85px;top:1421.65px;width:475.60000000000014px;height:1.5px;background:#3b4250"></div>
<div class="abs" style="left:1185.85px;top:846.95px;width:1.5px;height:576.2px;background:#3b4250"></div>
<div class="abs" style="left:1343.75px;top:846.95px;width:1.5px;height:576.2px;background:#3b4250"></div>
<div class="abs" style="left:1501.75px;top:846.95px;width:1.5px;height:576.2px;background:#3b4250"></div>
<div class="abs" style="left:1659.95px;top:846.95px;width:1.5px;height:576.2px;background:#3b4250"></div>
<div class="abs cbx" style="left:1360px;top:856px;width:20px;height:20px"><svg width="20" height="20" viewBox="0 0 20 20"><path d="M4.6 11.2 L8.3 14.8 L15.4 6.2" stroke="#fff" stroke-width="3.3" fill="none" stroke-linecap="square" stroke-linejoin="miter"/></svg></div>
<div class="abs cbx" style="left:1517px;top:856px;width:21px;height:20px"><svg width="21" height="20" viewBox="0 0 20 20"><path d="M4.6 11.2 L8.3 14.8 L15.4 6.2" stroke="#fff" stroke-width="3.3" fill="none" stroke-linecap="square" stroke-linejoin="miter"/></svg></div>
<div class="abs th" style="left:1300px;width:187px;top:851px">state</div>
<div class="abs th" style="left:1458px;width:187px;top:851px">action</div>
<div class="abs cbx" style="left:1195px;top:918.45px;width:21px;height:20px"><svg width="21" height="20" viewBox="0 0 20 20"><path d="M4.6 11.2 L8.3 14.8 L15.4 6.2" stroke="#fff" stroke-width="3.3" fill="none" stroke-linecap="square" stroke-linejoin="miter"/></svg></div>
<div class="abs cbx" style="left:1360px;top:918.45px;width:20px;height:20px"><svg width="20" height="20" viewBox="0 0 20 20"><path d="M4.6 11.2 L8.3 14.8 L15.4 6.2" stroke="#fff" stroke-width="3.3" fill="none" stroke-linecap="square" stroke-linejoin="miter"/></svg></div>
<div class="abs cbx" style="left:1517px;top:918.45px;width:21px;height:20px"><svg width="21" height="20" viewBox="0 0 20 20"><path d="M4.6 11.2 L8.3 14.8 L15.4 6.2" stroke="#fff" stroke-width="3.3" fill="none" stroke-linecap="square" stroke-linejoin="miter"/></svg></div>
<div class="abs tm" style="left:1229px;top:913.95px">Motor 0</div>
<div class="abs tv" style="left:1300px;width:188px;top:913.95px;color:#b3261e">-1.05</div>
<div class="abs tv" style="left:1458px;width:188px;top:913.95px;color:#f26b6b">-0.97</div>
<div class="abs cbx" style="left:1195px;top:1008.4000000000001px;width:21px;height:20px"><svg width="21" height="20" viewBox="0 0 20 20"><path d="M4.6 11.2 L8.3 14.8 L15.4 6.2" stroke="#fff" stroke-width="3.3" fill="none" stroke-linecap="square" stroke-linejoin="miter"/></svg></div>
<div class="abs cbx" style="left:1360px;top:1008.4000000000001px;width:20px;height:20px"><svg width="20" height="20" viewBox="0 0 20 20"><path d="M4.6 11.2 L8.3 14.8 L15.4 6.2" stroke="#fff" stroke-width="3.3" fill="none" stroke-linecap="square" stroke-linejoin="miter"/></svg></div>
<div class="abs cbx" style="left:1517px;top:1008.4000000000001px;width:21px;height:20px"><svg width="21" height="20" viewBox="0 0 20 20"><path d="M4.6 11.2 L8.3 14.8 L15.4 6.2" stroke="#fff" stroke-width="3.3" fill="none" stroke-linecap="square" stroke-linejoin="miter"/></svg></div>
<div class="abs tm" style="left:1229px;top:1003.9000000000001px">Motor 1</div>
<div class="abs tv" style="left:1300px;width:188px;top:1003.9000000000001px;color:#a0a03c">-13.45</div>
<div class="abs tv" style="left:1458px;width:188px;top:1003.9000000000001px;color:#f2f06e">-15.29</div>
<div class="abs cbx" style="left:1195px;top:1098.15px;width:21px;height:20px"><svg width="21" height="20" viewBox="0 0 20 20"><path d="M4.6 11.2 L8.3 14.8 L15.4 6.2" stroke="#fff" stroke-width="3.3" fill="none" stroke-linecap="square" stroke-linejoin="miter"/></svg></div>
<div class="abs cbx" style="left:1360px;top:1098.15px;width:20px;height:20px"><svg width="20" height="20" viewBox="0 0 20 20"><path d="M4.6 11.2 L8.3 14.8 L15.4 6.2" stroke="#fff" stroke-width="3.3" fill="none" stroke-linecap="square" stroke-linejoin="miter"/></svg></div>
<div class="abs cbx" style="left:1517px;top:1098.15px;width:21px;height:20px"><svg width="21" height="20" viewBox="0 0 20 20"><path d="M4.6 11.2 L8.3 14.8 L15.4 6.2" stroke="#fff" stroke-width="3.3" fill="none" stroke-linecap="square" stroke-linejoin="miter"/></svg></div>
<div class="abs tm" style="left:1229px;top:1093.65px">Motor 2</div>
<div class="abs tv" style="left:1300px;width:188px;top:1093.65px;color:#4fa838">10.63</div>
<div class="abs tv" style="left:1458px;width:188px;top:1093.65px;color:#88f07a">14.33</div>
<div class="abs cbx" style="left:1195px;top:1187.9px;width:21px;height:20px"><svg width="21" height="20" viewBox="0 0 20 20"><path d="M4.6 11.2 L8.3 14.8 L15.4 6.2" stroke="#fff" stroke-width="3.3" fill="none" stroke-linecap="square" stroke-linejoin="miter"/></svg></div>
<div class="abs cbx" style="left:1360px;top:1187.9px;width:20px;height:20px"><svg width="20" height="20" viewBox="0 0 20 20"><path d="M4.6 11.2 L8.3 14.8 L15.4 6.2" stroke="#fff" stroke-width="3.3" fill="none" stroke-linecap="square" stroke-linejoin="miter"/></svg></div>
<div class="abs cbx" style="left:1517px;top:1187.9px;width:21px;height:20px"><svg width="21" height="20" viewBox="0 0 20 20"><path d="M4.6 11.2 L8.3 14.8 L15.4 6.2" stroke="#fff" stroke-width="3.3" fill="none" stroke-linecap="square" stroke-linejoin="miter"/></svg></div>
<div class="abs tm" style="left:1229px;top:1183.4px">Motor 3</div>
<div class="abs tv" style="left:1300px;width:188px;top:1183.4px;color:#48a69e">62.31</div>
<div class="abs tv" style="left:1458px;width:188px;top:1183.4px;color:#6ef0ec">63.54</div>
<div class="abs cbx" style="left:1195px;top:1277.4px;width:21px;height:20px"><svg width="21" height="20" viewBox="0 0 20 20"><path d="M4.6 11.2 L8.3 14.8 L15.4 6.2" stroke="#fff" stroke-width="3.3" fill="none" stroke-linecap="square" stroke-linejoin="miter"/></svg></div>
<div class="abs cbx" style="left:1360px;top:1277.4px;width:20px;height:20px"><svg width="20" height="20" viewBox="0 0 20 20"><path d="M4.6 11.2 L8.3 14.8 L15.4 6.2" stroke="#fff" stroke-width="3.3" fill="none" stroke-linecap="square" stroke-linejoin="miter"/></svg></div>
<div class="abs cbx" style="left:1517px;top:1277.4px;width:21px;height:20px"><svg width="21" height="20" viewBox="0 0 20 20"><path d="M4.6 11.2 L8.3 14.8 L15.4 6.2" stroke="#fff" stroke-width="3.3" fill="none" stroke-linecap="square" stroke-linejoin="miter"/></svg></div>
<div class="abs tm" style="left:1229px;top:1272.9px">Motor 4</div>
<div class="abs tv" style="left:1300px;width:188px;top:1272.9px;color:#1f1f96">-3.52</div>
<div class="abs tv" style="left:1458px;width:188px;top:1272.9px;color:#5e5ef0">-2.99</div>
<div class="abs cbx" style="left:1195px;top:1367.15px;width:21px;height:20px"><svg width="21" height="20" viewBox="0 0 20 20"><path d="M4.6 11.2 L8.3 14.8 L15.4 6.2" stroke="#fff" stroke-width="3.3" fill="none" stroke-linecap="square" stroke-linejoin="miter"/></svg></div>
<div class="abs cbx" style="left:1360px;top:1367.15px;width:20px;height:20px"><svg width="20" height="20" viewBox="0 0 20 20"><path d="M4.6 11.2 L8.3 14.8 L15.4 6.2" stroke="#fff" stroke-width="3.3" fill="none" stroke-linecap="square" stroke-linejoin="miter"/></svg></div>
<div class="abs cbx" style="left:1517px;top:1367.15px;width:21px;height:20px"><svg width="21" height="20" viewBox="0 0 20 20"><path d="M4.6 11.2 L8.3 14.8 L15.4 6.2" stroke="#fff" stroke-width="3.3" fill="none" stroke-linecap="square" stroke-linejoin="miter"/></svg></div>
<div class="abs tm" style="left:1229px;top:1362.65px">Motor 5</div>
<div class="abs tv" style="left:1300px;width:188px;top:1362.65px;color:#a4249e">-34.54</div>
<div class="abs tv" style="left:1458px;width:188px;top:1362.65px;color:#e85cf0">-33.49</div>
</body></html>
